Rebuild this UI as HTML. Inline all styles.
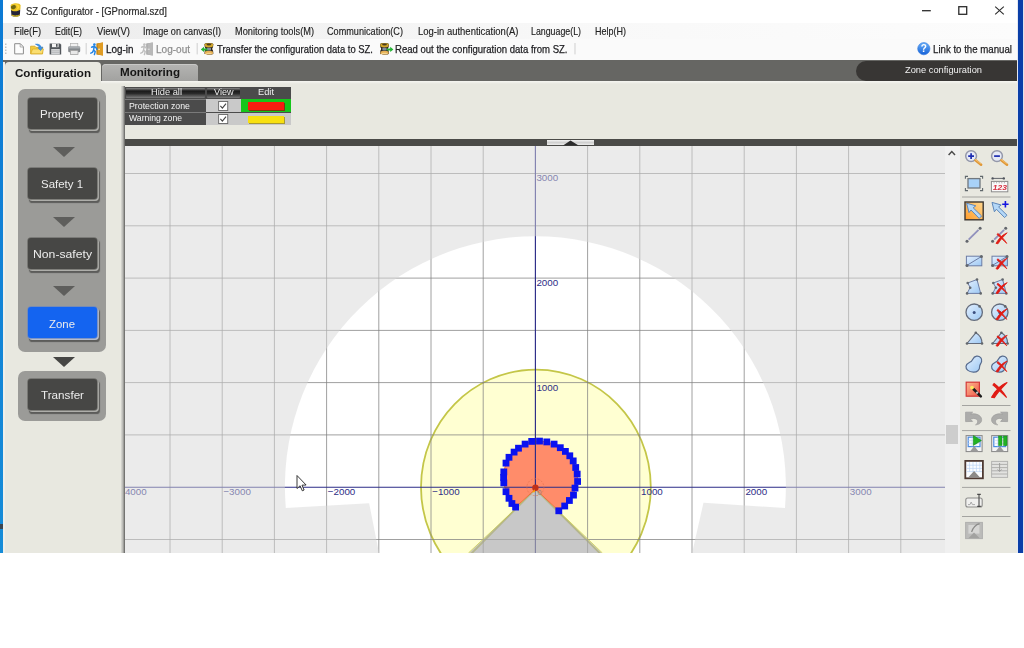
<!DOCTYPE html>
<html>
<head>
<meta charset="utf-8">
<title>SZ Configurator - [GPnormal.szd]</title>
<style>
html,body{margin:0;padding:0;}
body{width:1024px;height:648px;position:relative;overflow:hidden;background:#fff;font-family:"Liberation Sans",sans-serif;color:#000;}
.a{position:absolute;}
.t{position:absolute;white-space:nowrap;line-height:1;transform-origin:0 0;}
#win{left:0;top:0;width:1024px;height:553px;background:#e8e8e0;overflow:hidden;}
#lblue{left:0;top:0;width:2.7px;height:553px;background:linear-gradient(#0c7ad4,#168cd8);box-shadow:0.7px 0 0 #7a8a98;}
#rblue{left:1018px;top:0;width:5px;height:553px;background:#0a3ea8;}
#rlast{left:1023px;top:0;width:1px;height:553px;background:#dfe3ec;}
#rgap{left:1016.5px;top:0;width:1.5px;height:553px;background:#e4e8f2;}
#title{left:3px;top:0;width:1013.5px;height:22.6px;background:#fff;}
#menu{left:3px;top:22.6px;width:1013.5px;height:16.4px;background:linear-gradient(90deg,#ececec 0%,#f1f1f1 25%,#f8f8f8 55%,#fcfcfc 100%);}
#tool{left:3px;top:39px;width:1013.5px;height:21px;background:#fafafa;}
#tabbar{left:3px;top:60px;width:1013.5px;height:21px;background:#666663;}
#pill{left:856px;top:61px;width:160.5px;height:20px;background:#383634;border-radius:10px 0 0 10px;}
#tab1{left:4.5px;top:62px;width:96.5px;height:22px;background:#e8e8e0;border-radius:4px 4px 0 0;}
#tab2{left:102px;top:63.5px;width:95.5px;height:17.5px;background:linear-gradient(#b4b4b2,#a2a2a0);border-radius:4px 4px 0 0;box-shadow:inset 0 1px 0 #c8c8c6;}
.panel{background:#9b9b98;border-radius:7px;}
.btn{background:#474745;border-radius:3px;box-shadow:0 0 0 0.8px #70706c, 1.3px 1.3px 0 0.6px #aeaeaa, 1.6px 2.6px 1px 0.6px #5c5c5a;}
.tri{width:0;height:0;border-left:11px solid transparent;border-right:11px solid transparent;border-top:10.4px solid #5e5e5c;}
</style>
</head>
<body>
<div id="win" class="a">
<div id="blr" class="a" style="left:0;top:0;width:1024px;height:560px;filter:blur(0.5px)">
<div id="lblue" class="a"></div>
<div class="a" style="left:0;top:523.5px;width:2.7px;height:5px;background:#3c4650;z-index:2"></div>
<div id="rgap" class="a"></div>
<div id="rblue" class="a"></div>
<div id="rlast" class="a"></div>
<div id="title" class="a"></div>
<div id="menu" class="a"></div>
<div id="tool" class="a"></div>
<div id="tabbar" class="a"></div>
<div id="pill" class="a"></div>
<div class="a" style="left:3px;top:81px;width:1013.5px;height:3px;background:linear-gradient(#f6f6f2,#e8e8e0)"></div>
<div class="a" style="left:3px;top:62px;width:1.5px;height:491px;background:#efefea"></div>
<div id="tab1" class="a"></div>
<div id="tab2" class="a"></div>
<div class="a panel" style="left:18px;top:89px;width:88px;height:263px"></div>
<div class="a panel" style="left:18px;top:371px;width:88px;height:49.5px"></div>
<div class="a btn" style="left:27.5px;top:97.5px;width:69px;height:31px;"></div>
<div class="a btn" style="left:27.5px;top:167.5px;width:69px;height:31px;"></div>
<div class="a btn" style="left:27.5px;top:237.5px;width:69px;height:31px;"></div>
<div class="a btn" style="left:27.5px;top:306.7px;width:69px;height:31.8px;background:#1464f0;box-shadow:0 0 0 0.8px #6c88c0, 1.3px 1.3px 0 0.6px #b4bcd0, 1.6px 2.6px 1px 0.6px #5c5c5a;"></div>
<div class="a btn" style="left:27.5px;top:378.5px;width:69px;height:31px;"></div>
<div class="a tri" style="left:52.6px;top:147.3px"></div>
<div class="a tri" style="left:52.6px;top:217px"></div>
<div class="a tri" style="left:52.6px;top:286px"></div>
<div class="a tri" style="left:53.2px;top:356.6px;border-top-color:#464644"></div>
<div class="a" style="left:125px;top:86.7px;width:166.4px;height:38.2px;background:#4b4b4b"></div>
<div class="a" style="left:125px;top:98.6px;width:81px;height:0.8px;background:#7a7a7a"></div><div class="a" style="left:125px;top:112px;width:81px;height:0.8px;background:#7a7a7a"></div>
<div class="a" style="left:126px;top:87.5px;width:79px;height:10.5px;background:linear-gradient(#8a8a8a 0,#1a1a1a 30%,#2a2a2a 55%,#7c7c7c 100%);border-radius:1px"></div>
<div class="a" style="left:207px;top:87.5px;width:33px;height:10.5px;background:linear-gradient(#8a8a8a 0,#1a1a1a 30%,#2a2a2a 55%,#7c7c7c 100%);border-radius:1px"></div>
<div class="a" style="left:206px;top:99.2px;width:34.5px;height:12.4px;background:#c9c9c9"></div>
<div class="a" style="left:206px;top:112.8px;width:34.5px;height:12px;background:#c9c9c9"></div>
<div class="a" style="left:241.2px;top:99px;width:50.2px;height:13px;background:#16c61a"></div>
<div class="a" style="left:241.2px;top:112.8px;width:50.2px;height:12px;background:#c9c9c9"></div>
<div class="a" style="left:248px;top:102px;width:35.5px;height:7.5px;background:#f81c10;box-shadow:1px 1px 0 #7a3a10"></div>
<div class="a" style="left:248px;top:115.5px;width:35.5px;height:7.5px;background:#f8e010;box-shadow:1px 1px 0 #a89a30"></div>
<svg class="a" style="left:218.2px;top:100.5px" width="10.4" height="10" viewBox="0 0 11 11"><rect x="0.5" y="0.5" width="10" height="10" fill="#fff" stroke="#666" stroke-width="1"/><path d="M2.4,5.4 L4.6,7.8 L8.6,2.8" fill="none" stroke="#444" stroke-width="1.2"/></svg>
<svg class="a" style="left:218.2px;top:113.5px" width="10.4" height="10" viewBox="0 0 11 11"><rect x="0.5" y="0.5" width="10" height="10" fill="#fff" stroke="#666" stroke-width="1"/><path d="M2.4,5.4 L4.6,7.8 L8.6,2.8" fill="none" stroke="#444" stroke-width="1.2"/></svg>
<div class="a" style="left:123px;top:139.1px;width:893.5px;height:7.1px;background:#4a4a48"></div>
<div class="a" style="left:547.3px;top:139.8px;width:46.4px;height:5.6px;background:linear-gradient(#f4f4f4,#d0d0d0 50%,#ececec)"></div>
<svg class="a" style="left:560px;top:139px" width="22" height="7" viewBox="560 139 22 7"><polygon points="563,145.6 570.5,140.4 578.6,145.6" fill="#2c2c2c"/></svg>
<div class="a" style="left:121.2px;top:86px;width:3.6px;height:467px;background:linear-gradient(90deg,#dcdcd6 0,#b4b4b0 50%,#5e5e5c 100%)"></div>
<svg class="a" style="left:124.5px;top:146px" width="821" height="407" viewBox="124.5 146 821 407">
<rect x="124" y="146" width="822" height="407" fill="#ffffff"/>
<path d="M534.9,489.2 L454.2,570.4 A114.9 117.6 0 1 1 616.6,570.4 Z" fill="#ffffd2" stroke="#c4c648" stroke-width="1.8"/>
<polygon points="534.9,489.2 515.1,507.1 511.4,503.5 508.5,498.3 505.5,491.7 503.3,482.9 503.1,477.4 503.3,471.9 505.5,463.1 508.5,457.3 513.6,452.1 518.0,448.2 524.6,444.1 531.2,441.4 539.0,441.1 546.3,441.9 553.6,444.1 559.8,447.7 564.9,451.4 569.3,455.8 572.7,460.9 575.2,467.5 576.7,474.1 577.1,481.5 574.5,488.1 573.0,495.1 568.9,500.5 564.2,506.0 558.3,510.8" fill="#ff8c6a" stroke="#ee6a3c" stroke-width="1"/>
<path d="M169.5,146V553M221.7,146V553M273.9,146V553M326.1,146V553M378.3,146V553M430.5,146V553M482.7,146V553M587.1,146V553M639.3,146V553M691.5,146V553M743.7,146V553M795.9,146V553M848.1,146V553M900.3,146V553M124,539.5H946M124,434.9H946M124,382.6H946M124,330.4H946M124,278.1H946M124,225.8H946M124,173.5H946" stroke="#808080" stroke-width="0.75" fill="none"/>
<path d="M124,487.2H946M534.9,146V553" stroke="#2c2c88" stroke-width="1.15" fill="none"/>
<g font-family="Liberation Sans,sans-serif" font-size="9.8" fill="#2e2e86"><text x="124.4" y="495.2">4000</text><text x="222.9" y="495.2">−3000</text><text x="327.3" y="495.2">−2000</text><text x="431.7" y="495.2">−1000</text><text x="640.5" y="495.2">1000</text><text x="744.9" y="495.2">2000</text><text x="849.3" y="495.2">3000</text><text x="535.9" y="390.5">1000</text><text x="535.9" y="286.0">2000</text><text x="535.9" y="181.4">3000</text></g>
<path d="M124,146H946V554H124Z M285.3,508.0 A250.5 250.5 0 1 1 784.5,508.0 L703,502.8 L691.5,553.5 L378.6,553.5 L368.6,503.2 Z" fill="#d7d7d7" fill-opacity="0.5" fill-rule="evenodd"/>
<polygon points="534.9,489.4 467.9,553.5 601.9,553.5" fill="#aeaeae" fill-opacity="0.68"/>
<path d="M515,509 L467.9,553 M558,511 L601.9,553" stroke="#c6c846" stroke-width="1" opacity="0.7"/>
<circle cx="534.9" cy="487.2" r="8.5" fill="none" stroke="#e0704c" stroke-width="0.6" stroke-dasharray="2 1.5"/>
<circle cx="534.9" cy="487.7" r="3.2" fill="#c03018"/>
<polygon points="534.4,489.2 531.4,492.2 534.4,492.2" fill="#ffa000"/>
<rect x="511.7" y="503.7" width="6.8" height="6.8" fill="#0a12f0"/>
<rect x="508.0" y="500.1" width="6.8" height="6.8" fill="#0a12f0"/>
<rect x="505.1" y="494.9" width="6.8" height="6.8" fill="#0a12f0"/>
<rect x="502.1" y="488.3" width="6.8" height="6.8" fill="#0a12f0"/>
<rect x="499.9" y="479.5" width="6.8" height="6.8" fill="#0a12f0"/>
<rect x="499.7" y="474.0" width="6.8" height="6.8" fill="#0a12f0"/>
<rect x="499.9" y="468.5" width="6.8" height="6.8" fill="#0a12f0"/>
<rect x="502.1" y="459.7" width="6.8" height="6.8" fill="#0a12f0"/>
<rect x="505.1" y="453.9" width="6.8" height="6.8" fill="#0a12f0"/>
<rect x="510.2" y="448.7" width="6.8" height="6.8" fill="#0a12f0"/>
<rect x="514.6" y="444.8" width="6.8" height="6.8" fill="#0a12f0"/>
<rect x="521.2" y="440.7" width="6.8" height="6.8" fill="#0a12f0"/>
<rect x="527.8" y="438.0" width="6.8" height="6.8" fill="#0a12f0"/>
<rect x="535.6" y="437.7" width="6.8" height="6.8" fill="#0a12f0"/>
<rect x="542.9" y="438.5" width="6.8" height="6.8" fill="#0a12f0"/>
<rect x="550.2" y="440.7" width="6.8" height="6.8" fill="#0a12f0"/>
<rect x="556.4" y="444.3" width="6.8" height="6.8" fill="#0a12f0"/>
<rect x="561.5" y="448.0" width="6.8" height="6.8" fill="#0a12f0"/>
<rect x="565.9" y="452.4" width="6.8" height="6.8" fill="#0a12f0"/>
<rect x="569.3" y="457.5" width="6.8" height="6.8" fill="#0a12f0"/>
<rect x="571.8" y="464.1" width="6.8" height="6.8" fill="#0a12f0"/>
<rect x="573.3" y="470.7" width="6.8" height="6.8" fill="#0a12f0"/>
<rect x="573.7" y="478.1" width="6.8" height="6.8" fill="#0a12f0"/>
<rect x="571.1" y="484.7" width="6.8" height="6.8" fill="#0a12f0"/>
<rect x="569.6" y="491.7" width="6.8" height="6.8" fill="#0a12f0"/>
<rect x="565.5" y="497.1" width="6.8" height="6.8" fill="#0a12f0"/>
<rect x="560.8" y="502.6" width="6.8" height="6.8" fill="#0a12f0"/>
<rect x="554.9" y="507.4" width="6.8" height="6.8" fill="#0a12f0"/>
<text x="536.9" y="495.2" font-family="Liberation Sans,sans-serif" font-size="7" fill="#888">0</text>
<path d="M296.5,475.5 L296.5,488.5 L299.6,485.8 L301.8,490.8 L303.6,490 L301.5,485.2 L305.6,485 Z" fill="#fff" stroke="#222" stroke-width="0.9" stroke-linejoin="round"/>
</svg>
<div class="a" style="left:945px;top:146px;width:14.6px;height:407px;background:#f0f0f0"></div>
<div class="a" style="left:946.2px;top:424.5px;width:11.6px;height:19px;background:#cdcdcd"></div>
<svg class="a" style="left:946px;top:148px" width="12" height="10" viewBox="0 0 12 10"><path d="M2.6,7 L5.8,3.6 L9,7" fill="none" stroke="#4a4a4a" stroke-width="1.5"/></svg>
<svg class="a" style="left:958px;top:146px" width="59" height="407" viewBox="958 146 59 407">
<defs><linearGradient id="lb" x1="0" y1="0" x2="1" y2="1"><stop offset="0" stop-color="#e4f0fe"/><stop offset="1" stop-color="#9cc8f4"/></linearGradient><linearGradient id="og" x1="1" y1="0" x2="0" y2="1"><stop offset="0" stop-color="#ffd890"/><stop offset="1" stop-color="#ff9c28"/></linearGradient><linearGradient id="sg" x1="0" y1="0" x2="1" y2="1"><stop offset="0" stop-color="#fcb890"/><stop offset="1" stop-color="#f05848"/></linearGradient><g id="rx"><path d="M-5.6,5.4 C-3,1 0,-3 5.6,-5.2 C2.5,-2 -1,1.5 -3.6,5.8 Z" fill="#e01c14" stroke="#e01c14" stroke-width="0.8" stroke-linejoin="round"/><path d="M-3.8,-4.6 C-1,-2.5 2.5,1 5.2,5.4 C1.5,2.2 -1.5,-1 -4.6,-3.4 Z" fill="#e01c14" stroke="#e01c14" stroke-width="0.8" stroke-linejoin="round"/></g><g id="arw"><path d="M0,0 L9.2,2.6 L6.6,4.6 L15,12.8 L12.6,15.2 L4.4,6.8 L2.4,9.4 Z" fill="#b4d8f8" stroke="#5c86b8" stroke-width="1" stroke-linejoin="round"/></g><g id="lens"><circle cx="0" cy="0" r="5.4" fill="#e6eaf6" stroke="#9498aa" stroke-width="1.5"/><path d="M4.4,4.2 L10,8.6" stroke="#e09838" stroke-width="2.6" stroke-linecap="round"/><path d="M4.2,3.4 L9.4,7.4" stroke="#f6c878" stroke-width="0.8" stroke-linecap="round"/></g></defs>
<use href="#lens" x="971.1" y="156.1"/><path d="M968.2,156.1h5.8M971.1,153.2v5.8" stroke="#1c2cb0" stroke-width="1.7"/>
<use href="#lens" x="997" y="156.1"/><path d="M994.1,156.1h5.8" stroke="#1c2cb0" stroke-width="1.7"/>
<rect x="968" y="178.6" width="12" height="9.4" fill="#a8d2f8" stroke="#70787e" stroke-width="1.3"/>
<path d="M965.4,178.8v-2.4h2.6M982.6,178.8v-2.4h-2.6M965.4,188v2.6h2.6M982.6,188v2.6h-2.6" fill="none" stroke="#60686c" stroke-width="1.1"/>
<path d="M992,178.4H1004.4" stroke="#60646c" stroke-width="1"/><circle cx="992.6" cy="178.4" r="1.2" fill="#50545c"/><circle cx="1003.8" cy="178.4" r="1.2" fill="#50545c"/>
<rect x="991.4" y="181.4" width="16.4" height="10.4" fill="#fafafa" stroke="#8a8a8a" stroke-width="1"/><path d="M994,181.4v2M996.6,181.4v2M999.2,181.4v2M1001.8,181.4v2M1004.4,181.4v2" stroke="#999" stroke-width="0.7"/>
<text x="992.8" y="190.4" font-family="Liberation Sans,sans-serif" font-size="7.4" font-weight="700" font-style="italic" fill="#d83040" textLength="14.2" lengthAdjust="spacingAndGlyphs">123</text>
<path d="M962,197H1010.5" stroke="#a4a4a0" stroke-width="1"/>
<rect x="965" y="202" width="18.2" height="17.8" fill="url(#og)" stroke="#3c3630" stroke-width="1.4"/>
<use href="#arw" x="966.6" y="203.2"/>
<use href="#arw" x="992" y="202.4"/><path d="M1002.2,204.2h6.4M1005.4,201v6.4" stroke="#1414e0" stroke-width="1.6"/>
<g transform="translate(0,0)">
<path d="M968.6,239.6L978.5,229.8" stroke="#9090bc" stroke-width="1.8"/><circle cx="967" cy="241.2" r="1.5" fill="#62666c"/><circle cx="980.1" cy="228.2" r="1.5" fill="#62666c"/>
<rect x="966.4" y="256.2" width="15.4" height="9.6" fill="url(#lb)" stroke="#6c7ca4" stroke-width="1"/><path d="M966.6,265.6L981.6,256.4" stroke="#6c7ca4" stroke-width="1"/><circle cx="967" cy="265.4" r="1.5" fill="#62666c"/><circle cx="981.4" cy="256.4" r="1.5" fill="#62666c"/>
<path d="M967.7,283L977,279.5L980.7,293.4H967.1L970.2,287.5Z" fill="url(#lb)" stroke="#6c7ca4" stroke-width="1"/><circle cx="967.7" cy="283" r="1.3" fill="#62666c"/><circle cx="977" cy="279.5" r="1.3" fill="#62666c"/><circle cx="980.7" cy="293.4" r="1.3" fill="#62666c"/><circle cx="967.1" cy="293.4" r="1.3" fill="#62666c"/><circle cx="970.2" cy="287.8" r="1.3" fill="#62666c"/>
<circle cx="974.2" cy="312.2" r="8.2" fill="url(#lb)" stroke="#646c7c" stroke-width="1.3"/><circle cx="974.2" cy="312.6" r="1.5" fill="#3c5080"/><circle cx="979.6" cy="306.4" r="1.3" fill="#62666c"/>
<path d="M967,343.5L975.8,332.8A12,12 0 0 1 982,343.5Z" fill="url(#lb)" stroke="#646c7c" stroke-width="1.1"/><circle cx="967" cy="343.5" r="1.3" fill="#62666c"/><circle cx="975.8" cy="332.8" r="1.3" fill="#62666c"/><circle cx="982" cy="343.5" r="1.3" fill="#62666c"/>
<path d="M976.6,356.2C980,355.8 982.4,358.6 981.6,361.6C981,363.8 979.4,364.8 979.6,366.8C979.8,370 977,372.4 973.4,372.2C969,372 965.6,369.6 966,366.2C966.4,363.2 969.4,362.6 971.2,361.4C973,360.2 972.6,356.8 976.6,356.2Z" fill="url(#lb)" stroke="#566a8c" stroke-width="1.2"/>
</g>
<g transform="translate(25.6,0)">
<path d="M968.6,239.6L978.5,229.8" stroke="#9090bc" stroke-width="1.8"/><circle cx="967" cy="241.2" r="1.5" fill="#62666c"/><circle cx="980.1" cy="228.2" r="1.5" fill="#62666c"/>
<rect x="966.4" y="256.2" width="15.4" height="9.6" fill="url(#lb)" stroke="#6c7ca4" stroke-width="1"/><path d="M966.6,265.6L981.6,256.4" stroke="#6c7ca4" stroke-width="1"/><circle cx="967" cy="265.4" r="1.5" fill="#62666c"/><circle cx="981.4" cy="256.4" r="1.5" fill="#62666c"/>
<path d="M967.7,283L977,279.5L980.7,293.4H967.1L970.2,287.5Z" fill="url(#lb)" stroke="#6c7ca4" stroke-width="1"/><circle cx="967.7" cy="283" r="1.3" fill="#62666c"/><circle cx="977" cy="279.5" r="1.3" fill="#62666c"/><circle cx="980.7" cy="293.4" r="1.3" fill="#62666c"/><circle cx="967.1" cy="293.4" r="1.3" fill="#62666c"/><circle cx="970.2" cy="287.8" r="1.3" fill="#62666c"/>
<circle cx="974.2" cy="312.2" r="8.2" fill="url(#lb)" stroke="#646c7c" stroke-width="1.3"/><circle cx="974.2" cy="312.6" r="1.5" fill="#3c5080"/><circle cx="979.6" cy="306.4" r="1.3" fill="#62666c"/>
<path d="M967,343.5L975.8,332.8A12,12 0 0 1 982,343.5Z" fill="url(#lb)" stroke="#646c7c" stroke-width="1.1"/><circle cx="967" cy="343.5" r="1.3" fill="#62666c"/><circle cx="975.8" cy="332.8" r="1.3" fill="#62666c"/><circle cx="982" cy="343.5" r="1.3" fill="#62666c"/>
<path d="M976.6,356.2C980,355.8 982.4,358.6 981.6,361.6C981,363.8 979.4,364.8 979.6,366.8C979.8,370 977,372.4 973.4,372.2C969,372 965.6,369.6 966,366.2C966.4,363.2 969.4,362.6 971.2,361.4C973,360.2 972.6,356.8 976.6,356.2Z" fill="url(#lb)" stroke="#566a8c" stroke-width="1.2"/>
</g>
<use href="#rx" x="1001.6" y="238"/>
<use href="#rx" x="1001.6" y="263.4"/>
<use href="#rx" x="1001.6" y="287.8"/>
<use href="#rx" x="1001.6" y="314"/>
<use href="#rx" x="1001.6" y="340.4"/>
<use href="#rx" x="1001.6" y="366.2"/>
<rect x="966.2" y="382.2" width="13.2" height="14" fill="url(#sg)" stroke="#d43838" stroke-width="1.2"/>
<path d="M973.4,389L980.8,396.4" stroke="#1c1c1c" stroke-width="2.6" stroke-linecap="round"/><path d="M976.4,392L977.8,393.4" stroke="#c8c8c8" stroke-width="2.2"/><circle cx="972" cy="387.6" r="1.9" fill="#ffe860"/>
<g transform="translate(999.3,389.8) scale(1.38)"><use href="#rx"/></g>
<path d="M962,405.5H1010.5" stroke="#a4a4a0" stroke-width="1"/>
<path d="M965.6,412.2L972.6,412.2L970.4,414.2C975.4,413 981.4,415 981.6,419.6C981.8,423 978.4,424.8 975.6,424.8C978,423.4 978.4,420.6 976.4,419.2C974.6,418 972.6,418.4 970.4,419.2L972.6,421.4L965.6,421.6Z" fill="#acacaa" stroke="#a0a09e" stroke-width="0.8" stroke-linejoin="round"/>
<g transform="translate(1973.2,0) scale(-1,1)"><path d="M965.6,412.2L972.6,412.2L970.4,414.2C975.4,413 981.4,415 981.6,419.6C981.8,423 978.4,424.8 975.6,424.8C978,423.4 978.4,420.6 976.4,419.2C974.6,418 972.6,418.4 970.4,419.2L972.6,421.4L965.6,421.6Z" fill="#acacaa" stroke="#a0a09e" stroke-width="0.8" stroke-linejoin="round"/></g>
<path d="M962,430.6H1010.5" stroke="#a4a4a0" stroke-width="1"/>
<g transform="translate(0,0)">
<rect x="966.1" y="435.6" width="16" height="16" fill="#f4f4f4" stroke="#868686" stroke-width="1"/>
<rect x="968.2" y="437.2" width="11.8" height="9.4" fill="#f8fbff" stroke="#4c8ce0" stroke-width="1.2"/>
<path d="M972.1,437.2v9.4M976.1,437.2v9.4M968.2,440.4h11.8M968.2,443.4h11.8" stroke="#c0d4f0" stroke-width="0.6"/>
<polygon points="974.3,446 970,451.5 978.6,451.5" fill="#9a9a9a"/>
</g>
<g transform="translate(25.6,0)">
<rect x="966.1" y="435.6" width="16" height="16" fill="#f4f4f4" stroke="#868686" stroke-width="1"/>
<rect x="968.2" y="437.2" width="11.8" height="9.4" fill="#f8fbff" stroke="#4c8ce0" stroke-width="1.2"/>
<path d="M972.1,437.2v9.4M976.1,437.2v9.4M968.2,440.4h11.8M968.2,443.4h11.8" stroke="#c0d4f0" stroke-width="0.6"/>
<polygon points="974.3,446 970,451.5 978.6,451.5" fill="#9a9a9a"/>
</g>
<polygon points="973.4,435.6 981.4,440.5 973.4,445.4" fill="#22b224" stroke="#128a14" stroke-width="0.6"/>
<rect x="998.6" y="436" width="3.4" height="9.6" fill="#22b224" stroke="#128a14" stroke-width="0.5"/><rect x="1003.6" y="436" width="3.4" height="9.6" fill="#22b224" stroke="#128a14" stroke-width="0.5"/>
<rect x="965.3" y="460.9" width="17.6" height="17.4" fill="#fbfdff" stroke="#4e3a32" stroke-width="1.8"/>
<path d="M969.6,462v10M973,462v10M976.4,462v10M979.8,462v10M966.4,465.2h15.6M966.4,468.4h15.6M966.4,471.6h15.6" stroke="#bcd4f4" stroke-width="0.7"/>
<polygon points="974.1,471 968.2,477.4 980,477.4" fill="#8c8a88"/>
<rect x="991.6" y="461.4" width="16" height="16" fill="#e2e2e0" stroke="#b4b4b2" stroke-width="1"/><path d="M991.6,464.4h16M991.6,467.6h16M991.6,470.8h16M991.6,474h16" stroke="#b0b0ae" stroke-width="1"/><path d="M999.6,463v8M997.6,469.4l2,2.2l2,-2.2" stroke="#a0a09e" stroke-width="1" fill="none"/>
<path d="M962,487.4H1010.5" stroke="#a4a4a0" stroke-width="1"/>
<rect x="965.8" y="498" width="16.4" height="9" rx="2" fill="#f0f0ee" stroke="#8c8c8a" stroke-width="1.1"/><path d="M968,504.6h2l1.2,-2.6l1.2,2.6h2.6" stroke="#aaa" stroke-width="1" fill="none"/><path d="M977.2,494.4h3.6M977.2,506.4h3.6M979,494.4v12" stroke="#4a4a4a" stroke-width="1.1"/>
<path d="M962,516.5H1010.5" stroke="#a4a4a0" stroke-width="1"/>
<rect x="965.6" y="522.4" width="16.8" height="16.2" fill="#bcbcba" stroke="#b0b0ae" stroke-width="1"/><rect x="968.4" y="525" width="11" height="8.6" fill="#d6d6d4"/><path d="M971.6,532C973,527.6 975.6,524.6 979.6,523.6" stroke="#8c8c8a" stroke-width="1.2" fill="none"/><polygon points="974,532.4 968.4,538.2 979.8,538.2" fill="#a2a2a0"/>
</svg>
<svg class="a" style="left:0;top:0" width="1024" height="60" viewBox="0 0 1024 60">
<defs><linearGradient id="hq" x1="0" y1="0" x2="0" y2="1"><stop offset="0" stop-color="#6ab0f8"/><stop offset="1" stop-color="#1460d8"/></linearGradient><g id="dev"><path d="M0.4,1.6C0.4,0 9.4,0 9.4,1.6L9,4.6C8,5.6 8,6.8 9,7.8L9.4,11C9.4,12.6 0.4,12.6 0.4,11L0.8,7.8C1.8,6.8 1.8,5.6 0.8,4.6Z" fill="#2c261c"/><path d="M0.7,1.7C0.7,0.3 9.1,0.3 9.1,1.7L8.8,4C6.8,5.2 3,5.2 1,4Z" fill="#d2a62a"/><ellipse cx="4.9" cy="1.9" rx="2.4" ry="1.1" fill="#4a3c1c"/><path d="M1,8.8C3,7.9 6.8,7.9 8.8,8.8L9.1,10.9C9.1,12.3 0.7,12.3 0.7,10.9Z" fill="#e6b054"/><path d="M2,10.6C3.6,10 6.2,10 7.8,10.6L7.8,11.2C6,11.8 3.8,11.8 2,11.2Z" fill="#f4d490"/><rect x="2.8" y="5.2" width="4.2" height="2.6" fill="#7e8ca0"/></g></defs>
<path d="M11,10C11,9 20.2,8.6 20.2,9.8L19.9,15C19.4,17 11.9,17.2 11.4,15.2Z" fill="#24243a"/>
<path d="M11.4,14.6C13.4,15.8 18,15.6 19.9,14.2L19.7,15.4C19,17 12.2,17.2 11.6,15.6Z" fill="#cdb424"/>
<path d="M10.6,6C10.4,2.6 20.4,2.4 20.6,5.4L20.4,9.4C18.4,11.6 12.8,11.8 10.9,10Z" fill="#e8c224"/>
<ellipse cx="13.4" cy="7.2" rx="2.6" ry="2" transform="rotate(-15 13.4 7.2)" fill="#6e6612"/>
<path d="M14.6,4.4C17.6,3.8 19.8,5.4 19.2,7.6C18.8,9 17.2,9.8 15.6,10C17.2,8.8 17.8,7.6 17.4,6.6C17,5.4 15.8,4.8 14.6,4.4Z" fill="#ffd93a"/>
<path d="M922,10.7H930.8" stroke="#2c2c2c" stroke-width="1.3"/>
<rect x="958.8" y="6.7" width="7.9" height="7.6" fill="none" stroke="#2c2c2c" stroke-width="1.3"/>
<path d="M995.2,6.6L1003.8,14.4M1003.8,6.6L995.2,14.4" stroke="#2c2c2c" stroke-width="1.1"/>
<path d="M5.8,43.6v1.4M5.8,46.6v1.4M5.8,49.6v1.4M5.8,52.6v1.4" stroke="#b4b4b4" stroke-width="1.2"/>
<path d="M14.7,43.7H20.4L23.4,46.8V53.9H14.7Z" fill="#fdfdfd" stroke="#8c8c8c" stroke-width="1"/><path d="M20.2,43.9V47H23.2" fill="none" stroke="#9a9a9a" stroke-width="0.8"/>
<path d="M30.6,46.2H35L36,47.4H42.6V53.8H30.6Z" fill="#f4cc3c" stroke="#d4a41c" stroke-width="0.8"/><path d="M30.8,53.8L32.6,49H43.4L42.4,53.8Z" fill="#fade70" stroke="#d4a41c" stroke-width="0.6"/>
<path d="M35.4,44.2C38.4,43.6 40.8,45 41.4,47.4L43,47L40.6,50.6L37.8,47.8L39.4,47.6C38.8,46 37.4,45 35.4,44.2Z" fill="#3c94ec" stroke="#2a78d0" stroke-width="0.5"/>
<path d="M49.6,43.6H60L61.2,44.8V54.4H49.6Z" fill="#53575c"/><rect x="52" y="43.6" width="6.6" height="3.6" fill="#f4f4f4"/><rect x="56" y="44" width="1.6" height="2.8" fill="#53575c"/><rect x="51.2" y="49" width="8.6" height="5.4" fill="#d4d6d8"/><path d="M51.2,50.8h8.6M51.2,52.6h8.6" stroke="#a8aaac" stroke-width="0.6"/>
<rect x="70.6" y="43.4" width="7.2" height="4" fill="#f0f0f0" stroke="#b0b0b0" stroke-width="0.7"/><rect x="68.2" y="46.6" width="12" height="5.6" rx="1.2" fill="#84888c"/><rect x="68.2" y="46.6" width="12" height="2" rx="1" fill="#a8acb0"/><rect x="70.4" y="50.4" width="7.6" height="4.2" fill="#e8e8e8" stroke="#9a9a9a" stroke-width="0.7"/>
<path d="M86.2,43V54.4" stroke="#cfcfcf" stroke-width="1"/>
<path d="M197.2,43V54.4" stroke="#cfcfcf" stroke-width="1"/>
<path d="M575,43V54.4" stroke="#cfcfcf" stroke-width="1"/>
<path d="M96.4,43.4L103,42.6V55.4L96.4,54.4Z" fill="#b87c10"/><path d="M97.6,43.4L103,42.6V55.4L97.6,54.4Z" fill="#e09c24"/><rect x="98.4" y="48.6" width="1.4" height="1.4" fill="#fff0c0"/><circle cx="94.4" cy="44.6" r="1.3" fill="#2484e4"/><path d="M91.6,47.2L94,46.2L96.2,47.8L97,49.4M94.2,46.4L93.6,50L95.2,51.6L94.4,54.6M93.6,50.2L92.4,52.4L90.8,53.2" fill="none" stroke="#2484e4" stroke-width="1.5" stroke-linecap="round" stroke-linejoin="round"/>
<path d="M146.2,43.4L152.8,42.6V55.4L146.2,54.4Z" fill="#a4a4a4"/><path d="M147.4,43.4L152.8,42.6V55.4L147.4,54.4Z" fill="#b8b8b8"/><rect x="148.2" y="48.6" width="1.4" height="1.4" fill="#e0e0e0"/><circle cx="144.4" cy="44.6" r="1.3" fill="#c0c0c0"/><path d="M141.6,47.2L144,46.2L146.2,47.8L147,49.4M144.2,46.4L143.6,50L145.2,51.6L144.4,54.6M143.6,50.2L142.4,52.4L140.8,53.2" fill="none" stroke="#c0c0c0" stroke-width="1.5" stroke-linecap="round" stroke-linejoin="round"/>
<use href="#dev" x="204" y="42.6"/><path d="M200.8,49.4L204,46.8V48.4H207.4V50.4H204V52Z" fill="#24b434"/>
<use href="#dev" x="379.6" y="42.6"/><path d="M393.4,49.4L390.2,46.8V48.4H386.8V50.4H390.2V52Z" fill="#24b434"/>
<circle cx="923.8" cy="48.7" r="6.1" fill="url(#hq)" stroke="#2a74dc" stroke-width="0.6"/>
<text x="923.8" y="52.4" text-anchor="middle" font-family="Liberation Sans,sans-serif" font-weight="700" font-size="10" fill="#fff">?</text>
</svg>
<span class="t" style="left:25.8px;top:5.6px;font-size:10.5px;color:#2a2a2a;transform:scaleX(0.9049);-webkit-text-stroke:0.2px #2a2a2a;">SZ Configurator - [GPnormal.szd]</span>
<span class="t" style="left:14px;top:27px;font-size:10.2px;color:#222;transform:scaleX(0.9172);-webkit-text-stroke:0.15px #222;">File(F)</span>
<span class="t" style="left:55px;top:27px;font-size:10.2px;color:#222;transform:scaleX(0.8670);-webkit-text-stroke:0.15px #222;">Edit(E)</span>
<span class="t" style="left:97px;top:27px;font-size:10.2px;color:#222;transform:scaleX(0.9300);-webkit-text-stroke:0.15px #222;">View(V)</span>
<span class="t" style="left:143px;top:27px;font-size:10.2px;color:#222;transform:scaleX(0.8945);-webkit-text-stroke:0.15px #222;">Image on canvas(I)</span>
<span class="t" style="left:235px;top:27px;font-size:10.2px;color:#222;transform:scaleX(0.9061);-webkit-text-stroke:0.15px #222;">Monitoring tools(M)</span>
<span class="t" style="left:327px;top:27px;font-size:10.2px;color:#222;transform:scaleX(0.8949);-webkit-text-stroke:0.15px #222;">Communication(C)</span>
<span class="t" style="left:417.5px;top:27px;font-size:10.2px;color:#222;transform:scaleX(0.9291);-webkit-text-stroke:0.15px #222;">Log-in authentication(A)</span>
<span class="t" style="left:531px;top:27px;font-size:10.2px;color:#222;transform:scaleX(0.8653);-webkit-text-stroke:0.15px #222;">Language(L)</span>
<span class="t" style="left:595px;top:27px;font-size:10.2px;color:#222;transform:scaleX(0.8830);-webkit-text-stroke:0.15px #222;">Help(H)</span>
<span class="t" style="left:105.5px;top:43.5px;font-size:11px;color:#222;transform:scaleX(0.8993);-webkit-text-stroke:0.3px #1c1c24;">Log-in</span>
<span class="t" style="left:155.5px;top:43.5px;font-size:11px;color:#8e8e8e;transform:scaleX(0.9112);-webkit-text-stroke:0.25px #8e8e8e;">Log-out</span>
<span class="t" style="left:216.7px;top:43.5px;font-size:11px;color:#222;transform:scaleX(0.8580);-webkit-text-stroke:0.25px #1c1c24;">Transfer the configuration data to SZ.</span>
<span class="t" style="left:395px;top:43.5px;font-size:11px;color:#222;transform:scaleX(0.8680);-webkit-text-stroke:0.25px #1c1c24;">Read out the configuration data from SZ.</span>
<span class="t" style="left:933px;top:43.5px;font-size:11px;color:#222;transform:scaleX(0.8788);-webkit-text-stroke:0.25px #1c1c24;">Link to the manual</span>
<span class="t" style="left:15px;top:67.5px;font-size:11.5px;color:#151515;font-weight:700;transform:scaleX(1.0083);">Configuration</span>
<span class="t" style="left:120px;top:67.4px;font-size:11.5px;color:#151515;font-weight:700;transform:scaleX(1.0100);">Monitoring</span>
<span class="t" style="left:905px;top:65.2px;font-size:9.5px;color:#f0f0f0;transform:scaleX(0.9784);">Zone configuration</span>
<span class="t" style="left:40.25px;top:108.8px;font-size:11px;color:#ececec;transform:scaleX(1.0462);">Property</span>
<span class="t" style="left:41px;top:178.8px;font-size:11px;color:#ececec;transform:scaleX(1.0407);">Safety 1</span>
<span class="t" style="left:32.5px;top:248.8px;font-size:11px;color:#ececec;transform:scaleX(1.1090);">Non-safety</span>
<span class="t" style="left:49px;top:318.8px;font-size:11px;color:#ececec;transform:scaleX(1.0368);">Zone</span>
<span class="t" style="left:40.5px;top:389.8px;font-size:11px;color:#ececec;transform:scaleX(1.0605);">Transfer</span>
<span class="t" style="left:150.5px;top:87.4px;font-size:9.8px;color:#f0f0f0;transform:scaleX(0.9484);">Hide all</span>
<span class="t" style="left:214px;top:87.4px;font-size:9.8px;color:#f0f0f0;transform:scaleX(0.9258);">View</span>
<span class="t" style="left:257.5px;top:87.4px;font-size:9.8px;color:#f0f0f0;transform:scaleX(0.9473);">Edit</span>
<span class="t" style="left:128.5px;top:101.2px;font-size:9.5px;color:#f4f4f4;transform:scaleX(0.9240);">Protection zone</span>
<span class="t" style="left:129px;top:113.1px;font-size:9.5px;color:#f4f4f4;transform:scaleX(0.9096);">Warning zone</span>
</div>
</div>
</body>
</html>
